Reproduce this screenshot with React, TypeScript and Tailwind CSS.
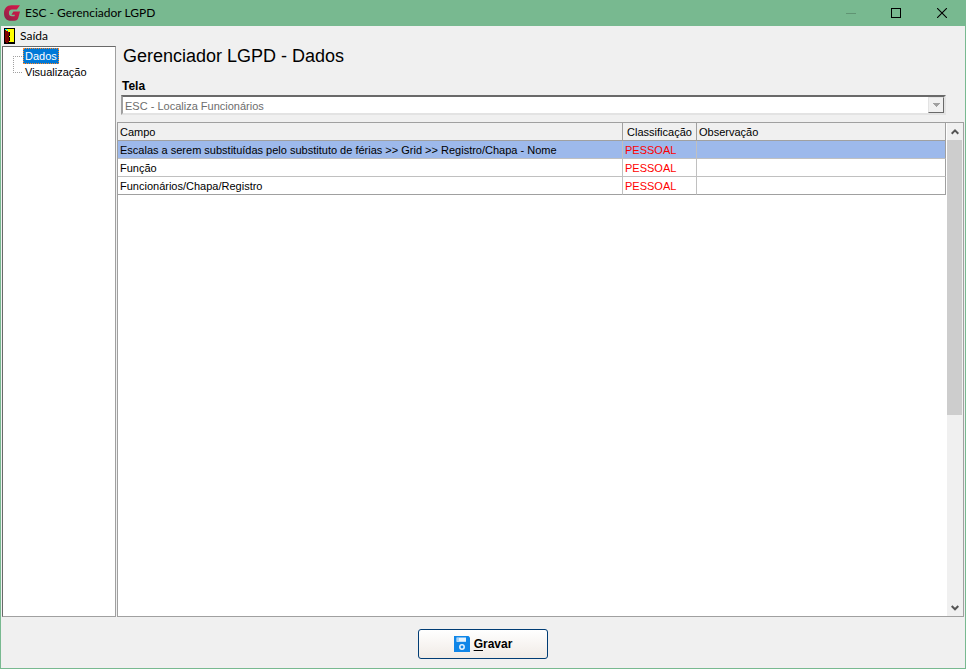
import clsx from "clsx";

const rows = [
  {
    campo: "Escalas a serem substituídas pelo substituto de férias >> Grid >> Registro/Chapa - Nome",
    classificacao: "PESSOAL",
    observacao: "",
  },
  { campo: "Função", classificacao: "PESSOAL", observacao: "" },
  { campo: "Funcionários/Chapa/Registro", classificacao: "PESSOAL", observacao: "" },
];

function LogoIcon() {
  return (
    <svg className="h-4 w-4" viewBox="0 0 16 16" aria-hidden="true">
      <defs>
        <linearGradient id="logo" x1="0" y1="1" x2="1" y2="0">
          <stop offset="0" stopColor="#7d2347" />
          <stop offset="0.5" stopColor="#b81c48" />
          <stop offset="1" stopColor="#d8174a" />
        </linearGradient>
      </defs>
      <path
        d="M16 0.3 L12.8 4.6 H8 C6 4.6 4.9 6 4.9 8 C4.9 10.1 6 11.3 8 11.3 H10.4 L11 9.8 H7.4 L9.4 6.4 H16 L14.4 12.6 C13.8 14.8 12.5 15.8 10.4 15.8 H6.8 C2.6 15.8 0 12.8 0 8.2 C0 3.6 2.9 0.3 7.4 0.3 Z"
        fill="url(#logo)"
      />
    </svg>
  );
}

function DoorIcon() {
  return (
    <svg className="h-4 w-[11px]" viewBox="0 0 11 16" shapeRendering="crispEdges" aria-hidden="true">
      <path d="M0 0h11v16H0z" fill="#000" />
      <path d="M1 1h9v13H1z" fill="#ffff00" />
      <path d="M1 2h1v1h2v1h1v10H4v1H2v-1H1z" fill="#800000" />
      <path d="M1 1h2v1H1zM3 2h1v1H3z" fill="#00ffff" />
      <path d="M5 4h1v4H5zM4 8h1v1H4zM5 9h1v4H5z" fill="#000" />
    </svg>
  );
}

function SaveIcon() {
  return (
    <svg className="h-4 w-4" viewBox="0 0 16 16" aria-hidden="true">
      <path d="M0 0h14.5L16 1.5V16H0z" fill="#0f86e8" />
      <path d="M2.5 1.5h9.5v4.3H2.5z" fill="#e6f3fd" />
      <path d="M3 2h2v3H3z" fill="#a8d3f8" />
      <circle cx="8" cy="11" r="2.2" fill="none" stroke="#e6f3fd" strokeWidth="1.5" />
    </svg>
  );
}

function ScrollArrow({ down = false }: { down?: boolean }) {
  return (
    <svg className="h-2 w-2" viewBox="0 0 8 8" aria-hidden="true">
      <path
        d={down ? "M0.7 2 L4 5.3 L7.3 2" : "M0.7 5.7 L4 2.4 L7.3 5.7"}
        fill="none"
        stroke="#555"
        strokeWidth="2"
      />
    </svg>
  );
}

function TitleBar() {
  return (
    <header className="flex h-[26px] shrink-0 items-center bg-[#78b990] pl-[3px] font-[Lato,sans-serif] text-xs text-black">
      <LogoIcon />
      <span className="flex-1 pl-[5px]">ESC - Gerenciador LGPD</span>
      <button type="button" disabled aria-label="Minimizar" className="flex h-full w-11 items-center justify-center">
        <svg className="h-[11px] w-[10px]" viewBox="0 0 10 11" shapeRendering="crispEdges">
          <path d="M0 5h10v1H0z" fill="#609473" />
        </svg>
      </button>
      <button type="button" aria-label="Maximizar" className="flex h-full w-[46px] items-center justify-center">
        <svg className="h-[10px] w-[10px]" viewBox="0 0 10 10" shapeRendering="crispEdges">
          <path d="M0.5 0.5h9v9h-9z" fill="none" stroke="#000" />
        </svg>
      </button>
      <button type="button" aria-label="Fechar" className="flex h-full w-[46px] items-center justify-center">
        <svg className="h-[10px] w-[10px]" viewBox="0 0 10 10">
          <path d="M0 0l10 10M10 0L0 10" stroke="#000" strokeWidth="1.1" />
        </svg>
      </button>
    </header>
  );
}

function Sidebar() {
  return (
    <nav className="mr-px w-[114px] shrink-0 border border-[#a0a0a0] border-t-[#696969] border-l-[#696969] bg-white pt-px pl-2.5">
      <ul className="flex">
        <li aria-hidden="true">
          <svg className="h-8 w-[10px]" viewBox="0 0 10 32" shapeRendering="crispEdges">
            <path d="M0.5 8v17M0 8.5h10M0 24.5h10" fill="none" stroke="#a0a0a0" strokeDasharray="1 1" />
          </svg>
        </li>
        <li className="flex flex-col items-start">
          <button
            type="button"
            className="h-4 border border-dotted border-[#ff8728] bg-[#0078d7] px-px text-[11px] leading-[14px] text-white"
          >
            Dados
          </button>
          <button type="button" className="h-4 px-0.5 text-[11px] leading-4 text-black">
            Visualização
          </button>
        </li>
      </ul>
    </nav>
  );
}

function FieldsTable() {
  return (
    <table className="w-full table-fixed border-separate border-spacing-0 text-left text-[11px] leading-4">
      <thead>
        <tr className="h-[18px] bg-[#f0f0f0]">
          <th className="border-r border-b border-[#a0a0a0] p-0 pt-px pl-0.5 font-normal">Campo</th>
          <th className="w-[74px] border-r border-b border-[#a0a0a0] p-0 pt-px text-center font-normal">Classificação</th>
          <th className="w-[249px] border-r border-b border-[#a0a0a0] p-0 pt-px pl-0.5 font-normal">Observação</th>
        </tr>
      </thead>
      <tbody>
        {rows.map((row, i) => {
          const line = i === rows.length - 1 ? "border-b-[#a0a0a0]" : "border-b-[#c0c0c0]";
          return (
            <tr key={row.campo} className={clsx("h-[18px]", i === 0 ? "bg-[#9db9eb]" : "bg-white")}>
              <td className={clsx("truncate border-r border-b border-r-[#c0c0c0] p-0 pt-px pl-0.5", line)}>{row.campo}</td>
              <td className={clsx("border-r border-b border-r-[#c0c0c0] p-0 pt-px pl-0.5 text-[#ff0000]", line)}>
                {row.classificacao}
              </td>
              <td className={clsx("border-r border-b border-r-[#a0a0a0] p-0 pt-px pl-0.5", line)}>{row.observacao}</td>
            </tr>
          );
        })}
      </tbody>
    </table>
  );
}

function ScrollBar() {
  return (
    <div className="ml-px flex w-4 shrink-0 flex-col bg-[#f0f0f0]">
      <button type="button" aria-label="Rolar para cima" className="flex h-[17px] items-center justify-center">
        <ScrollArrow />
      </button>
      <div className="flex-1 pr-px">
        <div className="h-[60%] bg-[#cdcdcd]" />
      </div>
      <button type="button" aria-label="Rolar para baixo" className="flex h-[17px] items-center justify-center">
        <ScrollArrow down />
      </button>
    </div>
  );
}

export default function App() {
  return (
    <div className="flex h-screen flex-col border border-t-0 border-[#78b990] bg-[#f0f0f0] font-['Liberation_Sans',Arial,sans-serif] text-black">
      <TitleBar />

      <div className="flex h-5 shrink-0 items-center pl-[3px]">
        <button type="button" className="flex items-center gap-[5px] font-[Lato,sans-serif] text-xs leading-4">
          <DoorIcon />
          Saída
        </button>
      </div>

      <div className="flex min-h-0 flex-1 px-px">
        <Sidebar />

        <main className="flex min-w-0 flex-1 flex-col">
          <h1 className="px-1.5 text-lg leading-5">Gerenciador LGPD - Dados</h1>
          <label htmlFor="tela" className="mt-3 px-[5px] text-xs leading-4 font-bold">
            Tela
          </label>
          <div className="mt-px mr-[18px] mb-[7px] ml-1 flex h-5 shrink-0 border-2 border-t-[#696969] border-r-[#e3e3e3] border-b-[#e3e3e3] border-l-[#a0a0a0] bg-white">
            <select
              id="tela"
              disabled
              className="min-w-0 flex-1 appearance-none bg-white pt-px pl-0.5 text-[11px] leading-4 text-[#6d6d6d] opacity-100"
            >
              <option>ESC - Localiza Funcionários</option>
            </select>
            <span className="flex w-4 items-center justify-center border border-[#e3e3e3] border-r-[#696969] border-b-[#696969] bg-[#f0f0f0]">
              <svg className="h-1 w-[7px]" viewBox="0 0 7 4" shapeRendering="crispEdges" aria-hidden="true">
                <path d="M0 0h7L3.5 4z" fill="#a0a0a0" />
              </svg>
            </span>
          </div>

          <div className="flex min-h-0 flex-1 border border-[#a0a0a0] bg-white">
            <div className="min-w-0 flex-1">
              <FieldsTable />
            </div>
            <ScrollBar />
          </div>
        </main>
      </div>

      <footer className="flex h-[51px] shrink-0 items-center justify-center">
        <button
          type="button"
          className="mt-0.5 flex h-[30px] w-[130px] items-center justify-center gap-1 rounded-[3px] border border-[#003c74] bg-linear-to-b from-white to-[#f0ebe6] text-xs font-bold"
        >
          <SaveIcon />
          <span>
            <span className="underline underline-offset-2">G</span>ravar
          </span>
        </button>
      </footer>
    </div>
  );
}
